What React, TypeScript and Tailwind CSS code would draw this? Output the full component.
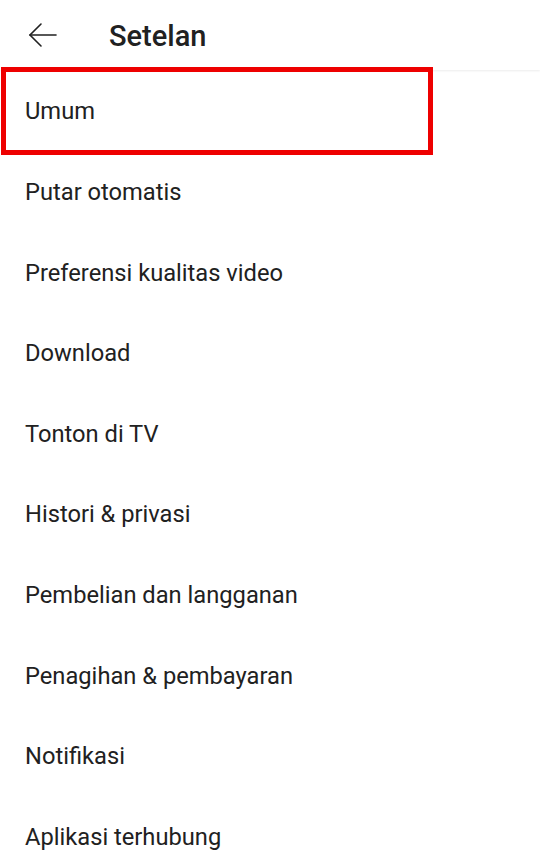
const items = [
  "Umum",
  "Putar otomatis",
  "Preferensi kualitas video",
  "Download",
  "Tonton di TV",
  "Histori & privasi",
  "Pembelian dan langganan",
  "Penagihan & pembayaran",
  "Notifikasi",
  "Aplikasi terhubung",
];

export default function App() {
  return (
    <div className="relative w-[540px] h-[850px] overflow-hidden bg-white font-['Roboto',sans-serif] text-[#212121]">
      {/* App bar */}
      <header className="relative z-10 flex items-center h-[70px] bg-white shadow-[0_1px_2px_rgba(0,0,0,0.08)]">
        <div className="w-[86px] pl-[26px] flex items-center">
          <svg width="32" height="28" viewBox="0 0 32 28" fill="none" stroke="#212121" strokeWidth="1.6" strokeLinecap="round">
            <path d="M4 14 H30" />
            <path d="M15 3 L4 14 L15 25" />
          </svg>
        </div>
        <h1 className="ml-[23px] pt-[2px] text-[29px] font-medium leading-none">Setelan</h1>
      </header>

      {/* Settings list */}
      <ul className="flex flex-col pt-[2px]">
        {items.map((label) => (
          <li key={label} className="h-[80.6px] flex items-center pl-[25px] text-[23.7px] leading-none">
            {label}
          </li>
        ))}
      </ul>

      {/* Highlight box */}
      <div className="absolute z-20 left-[1px] top-[67px] w-[432px] h-[88px] border-[5px] border-[#ee0000]" />
    </div>
  );
}
